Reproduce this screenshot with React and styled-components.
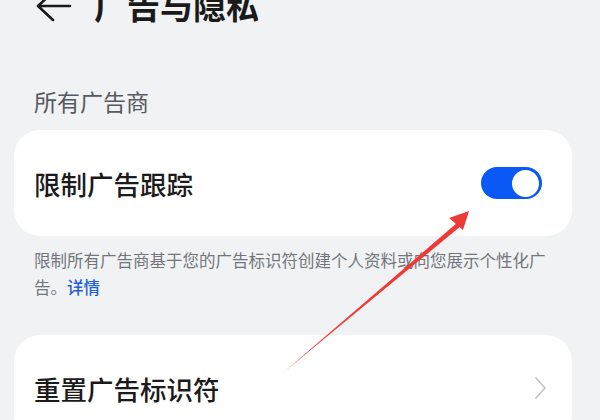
import React from "react";
import styled, { createGlobalStyle } from "styled-components";

const GlobalStyle = createGlobalStyle`
  html, body {
    margin: 0;
    padding: 0;
    background: #f1f2f4;
    overflow: hidden;
  }
  body {
    font-family: "Noto Sans CJK SC", "Noto Sans", sans-serif;
  }
`;

const Page = styled.div`
  position: relative;
  width: 600px;
  height: 420px;
  overflow: hidden;
  background: #f1f2f4;
`;

const Header = styled.div`
  display: flex;
  align-items: center;
  height: 40px;
  margin-top: -15px;
  padding-left: 36px;
  gap: 22px;
`;

const BackIcon = styled.svg`
  width: 36px;
  height: 40px;
  flex: none;
`;

const Title = styled.h1`
  margin: 0;
  font-size: 33px;
  line-height: 40px;
  font-weight: 700;
  color: #1a1a1a;
`;

const SectionLabel = styled.div`
  margin: 60px 0 0 34px;
  font-size: 23px;
  line-height: 32px;
  color: #555a60;
`;

const Card = styled.div`
  margin: ${(p) => p.$top}px 28px 0 14px;
  height: 106px;
  background: #ffffff;
  border-radius: 26px;
  display: flex;
  align-items: center;
  justify-content: space-between;
  padding: 0 30px 0 20px;
`;

const CardTitle = styled.div`
  font-size: 26.5px;
  font-weight: 500;
  color: #1b1b1b;
`;

const Toggle = styled.div`
  width: 61px;
  height: 32px;
  border-radius: 16px;
  background: #0a59f7;
  display: flex;
  align-items: center;
  justify-content: ${(p) => (p.$on ? "flex-end" : "flex-start")};
  padding: 0 3px;
  box-sizing: border-box;
`;

const Knob = styled.div`
  width: 27px;
  height: 27px;
  border-radius: 50%;
  background: #ffffff;
`;

const Note = styled.p`
  margin: 11px 40px 0 34px;
  font-size: 16.5px;
  line-height: 27px;
  color: #72767c;
`;

const Link = styled.span`
  color: #1f5fd6;
  font-weight: 500;
`;

const Chevron = styled.svg`
  width: 13px;
  height: 24px;
  margin-right: -5px;
`;

const Overlay = styled.svg`
  position: absolute;
  left: 0;
  top: 0;
  width: 600px;
  height: 420px;
  pointer-events: none;
`;

export default function App() {
  return (
    <Page>
      <GlobalStyle />
      <Header>
        <BackIcon viewBox="0 0 36 40">
          <path
            d="M34 21 H3 M17 7 L2 21 L17 35"
            fill="none"
            stroke="#1a1a1a"
            strokeWidth="2.6"
            strokeLinecap="round"
            strokeLinejoin="round"
          />
        </BackIcon>
        <Title>广告与隐私</Title>
      </Header>
      <SectionLabel>所有广告商</SectionLabel>
      <Card $top={13}>
        <CardTitle>限制广告跟踪</CardTitle>
        <Toggle $on>
          <Knob />
        </Toggle>
      </Card>
      <Note>
        限制所有广告商基于您的广告标识符创建个人资料或向您展示个性化广告。<Link>详情</Link>
      </Note>
      <Card $top={34}>
        <CardTitle>重置广告标识符</CardTitle>
        <Chevron viewBox="0 0 13 24">
          <path
            d="M2 2 L11 12 L2 22"
            fill="none"
            stroke="#c4c6ca"
            strokeWidth="1.8"
            strokeLinecap="round"
            strokeLinejoin="round"
          />
        </Chevron>
      </Card>
      <Overlay viewBox="0 0 600 420">
        <path d="M284 372 L458 222 L461 226 Z" fill="#ec3b36" />
        <path d="M469 211 L449 218 L463 230 Z" fill="#ec3b36" />
      </Overlay>
    </Page>
  );
}
